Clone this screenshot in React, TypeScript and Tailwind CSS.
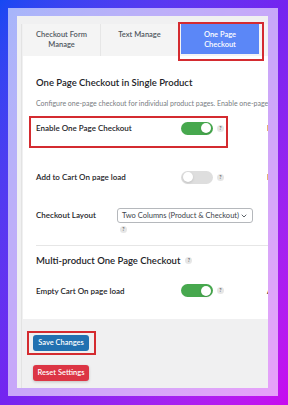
import { ChevronDown } from "lucide-react";

function Help() {
  return (
    <span className="flex h-[7px] w-[7px] shrink-0 items-center justify-center rounded-full bg-[#e6e6e6] text-[5px] font-semibold leading-none text-[#555]">
      ?
    </span>
  );
}

function Toggle({ on }: { on: boolean }) {
  return (
    <span
      className={
        on
          ? "flex h-[13px] w-[32px] items-center justify-end rounded-full bg-[#47a84e] px-[2px]"
          : "flex h-[13px] w-[32px] items-center justify-start rounded-full bg-[#dedede] px-[2px]"
      }
    >
      <span className="h-[10px] w-[10px] rounded-full bg-white shadow-sm" />
    </span>
  );
}

function ToggleRow({ label, on, next }: { label: string; on: boolean; next: string }) {
  return (
    <div className="grid h-[14px] grid-cols-[145px_86px_40px] items-center">
      <span className="text-[8px] font-semibold text-[#1d2327]">{label}</span>
      <span className="flex items-center gap-[4px]">
        <Toggle on={on} />
        <Help />
      </span>
      <span className="text-[8px] font-semibold text-[#1d2327]">{next}</span>
    </div>
  );
}

const tabs = ["Checkout Form Manage", "Text Manage", "One Page Checkout"];

export default function App() {
  return (
    <div className="h-[405px] w-[288px] overflow-hidden bg-gradient-to-br from-[#1648f2] via-[#7424f0] to-[#c70af0] pb-[9px] pl-2 pr-[10px] pt-2 font-['Lato',sans-serif]">
      <div className="h-full bg-white/60 pb-2 pl-[9px] pr-[10px] pt-2">
        <div className="h-full overflow-hidden bg-[#f0f0f1] pl-[4px] pt-[8px]">
          <div className="h-full border-l border-[#e3e3e3] pl-[1px]">
            <div className="w-[320px] bg-white pb-[21px]">
              <div className="relative flex h-[32px] bg-[#f4f4f4]">
                {tabs.map((tab, i) => (
                  <div
                    key={tab}
                    className={
                      i === 2
                        ? "mb-[2px] ml-[2px] flex w-[78px] items-start justify-center bg-[#5b87f7] px-2 pt-[6px] text-center text-[7.5px] font-semibold leading-[10px] text-white"
                        : "flex w-[78px] items-start justify-center border-r border-[#e6e6e6] px-2 pt-[6px] text-center text-[7.5px] font-semibold leading-[10px] text-[#50575e]"
                    }
                  >
                    {tab}
                  </div>
                ))}
                <div className="absolute left-[155px] top-[-2px] h-[39px] w-[86px] border-2 border-[#d42b30]" />
              </div>

              <div className="pl-[13px] pt-[20px]">
                <h2 className="text-[9.5px] font-semibold leading-[14px] text-[#1d2327]">
                  One Page Checkout in Single Product
                </h2>
                <p className="mt-[8px] whitespace-nowrap text-[7px] leading-[10px] text-[#787c82]">
                  Configure one-page checkout for individual product pages. Enable one-page checkout to show the form on product pages.
                </p>

                <div className="relative mt-[8px] h-[32px] pt-[5px]">
                  <ToggleRow label="Enable One Page Checkout" on next="Force" />
                  <div className="absolute left-[-7px] top-0 h-[32px] w-[199px] border-2 border-[#d42b30]" />
                </div>

                <div className="mt-[22px]">
                  <ToggleRow label="Add to Cart On page load" on={false} next="Hide" />
                </div>

                <div className="mt-[24px] flex items-start">
                  <span className="w-[81px] pt-[2px] text-[8px] font-semibold leading-[10px] text-[#1d2327]">
                    Checkout Layout
                  </span>
                  <div className="flex flex-col">
                    <div className="flex h-[15px] w-[136px] items-center justify-between rounded-[3px] border border-[#b5b8bc] bg-white pl-[4px] pr-[4px] text-[7.5px] text-[#3c434a]">
                      <span>Two Columns (Product &amp; Checkout)</span>
                      <ChevronDown size={8} strokeWidth={2.5} />
                    </div>
                    <span className="ml-[3px] mt-[2.5px]">
                      <Help />
                    </span>
                  </div>
                </div>

                <div className="mt-[12px] h-px bg-[#e6e6e6]" />

                <div className="mt-[8px] flex h-[14px] items-center gap-[5px]">
                  <h2 className="text-[9.5px] font-semibold leading-[14px] text-[#1d2327]">
                    Multi-product One Page Checkout
                  </h2>
                  <Help />
                </div>

                <div className="mt-[16px]">
                  <ToggleRow label="Empty Cart On page load" on next="Allow" />
                </div>
              </div>
            </div>

            <div className="pl-[4px] pt-[12px]">
              <div className="w-[69px] border-2 border-[#d42b30] px-[4px] py-[2px]">
                <button className="flex h-[16px] w-[56px] items-center justify-center rounded-[3px] bg-[#2271b1] text-[7.5px] font-semibold text-white">
                  Save Changes
                </button>
              </div>
              <button className="ml-[6px] mt-[10px] flex h-[16px] w-[56px] items-center justify-center rounded-[3px] bg-[#dc3545] text-[7.5px] font-semibold text-white shadow-[0_1px_3px_rgba(0,0,0,0.2)]">
                Reset Settings
              </button>
            </div>
          </div>
        </div>
      </div>
    </div>
  );
}
